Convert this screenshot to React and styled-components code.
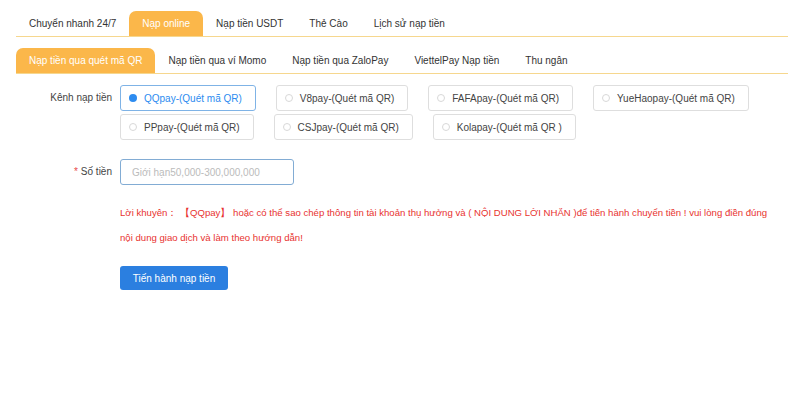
import React, { useState } from "react";
import styled, { createGlobalStyle } from "styled-components";

const GlobalStyle = createGlobalStyle`
  html, body {
    margin: 0;
    padding: 0;
    background: #fff;
    font-family: "Liberation Sans", Arial, sans-serif;
    color: #333;
  }
`;

const Page = styled.div`
  width: 772px;
  padding: 11px 0 0 16px;
`;

const TabBar = styled.div`
  display: flex;
  height: 25px;
  border-bottom: 1px solid #f6d78e;
  margin-bottom: ${(p) => p.$mb || 0}px;
`;

const Tab = styled.div`
  display: flex;
  align-items: center;
  padding: 0 ${(p) => p.$pad || 14}px;
  font-size: 10px;
  color: ${(p) => (p.$active ? "#fff" : "#333")};
  background: ${(p) => (p.$active ? "#fbb74a" : "transparent")};
  border-radius: 7px 7px 0 0;
  white-space: nowrap;
  cursor: pointer;
`;

const Row = styled.div`
  display: flex;
  align-items: ${(p) => p.$align || "center"};
  margin-top: ${(p) => p.$mt || 0}px;
`;

const Label = styled.div`
  width: 96px;
  flex: none;
  text-align: right;
  font-size: 10px;
  color: #444;
  padding-right: 8px;
  line-height: 26px;
`;

const Star = styled.span`
  color: #e84a4a;
  margin-right: 3px;
`;

const Channels = styled.div`
  display: flex;
  flex-wrap: wrap;
  column-gap: 20px;
  row-gap: 3px;
  width: 660px;
`;

const Channel = styled.div`
  display: flex;
  align-items: center;
  height: 24px;
  padding: 0 13px 0 8px;
  border: 1px solid ${(p) => (p.$checked ? "#7fb3e6" : "#dedede")};
  border-radius: 3px;
  font-size: 10px;
  color: ${(p) => (p.$checked ? "#2d8cf0" : "#444")};
  cursor: pointer;
`;

const Dot = styled.span`
  width: 8px;
  height: 8px;
  border-radius: 50%;
  box-sizing: border-box;
  border: ${(p) => (p.$checked ? "none" : "1px solid #d8d8d8")};
  background: ${(p) => (p.$checked ? "#2d8cf0" : "#fff")};
  margin-right: 7px;
  flex: none;
`;

const Input = styled.input`
  width: 174px;
  height: 26px;
  box-sizing: border-box;
  border: 1px solid #82acd4;
  border-radius: 3px;
  padding: 0 11px;
  font-size: 10px;
  font-family: inherit;
  outline: none;
  &::placeholder {
    color: #bbb;
  }
`;

const Tip = styled.p`
  margin: 15px 0 0 104px;
  font-size: 9.6px;
  line-height: 25px;
  color: #e8322f;
  width: 652px;
`;

const Submit = styled.button`
  display: block;
  margin: 16px 0 0 104px;
  width: 108px;
  height: 24px;
  border: none;
  border-radius: 3px;
  background: #2b7fe0;
  color: #fff;
  font-size: 10px;
  font-family: inherit;
  cursor: pointer;
`;

const topTabs = ["Chuyển nhanh 24/7", "Nạp online", "Nạp tiền USDT", "Thẻ Cào", "Lịch sử nạp tiền"];
const subTabs = ["Nạp tiền qua quét mã QR", "Nạp tiền qua ví Momo", "Nạp tiền qua ZaloPay", "ViettelPay Nạp tiền", "Thu ngân"];
const channels = [
  "QQpay-(Quét mã QR)",
  "V8pay-(Quét mã QR)",
  "FAFApay-(Quét mã QR)",
  "YueHaopay-(Quét mã QR)",
  "PPpay-(Quét mã QR)",
  "CSJpay-(Quét mã QR)",
  "Kolapay-(Quét mã QR )",
];

export default function App() {
  const [top, setTop] = useState(1);
  const [sub, setSub] = useState(0);
  const [channel, setChannel] = useState(0);

  return (
    <Page>
      <GlobalStyle />
      <TabBar $mb={11}>
        {topTabs.map((t, i) => (
          <Tab key={t} $active={i === top} $pad={13} onClick={() => setTop(i)}>
            {t}
          </Tab>
        ))}
      </TabBar>
      <TabBar $mb={11}>
        {subTabs.map((t, i) => (
          <Tab key={t} $active={i === sub} $pad={13} onClick={() => setSub(i)}>
            {t}
          </Tab>
        ))}
      </TabBar>

      <Row $align="flex-start">
        <Label>Kênh nạp tiền</Label>
        <Channels>
          {channels.map((c, i) => (
            <Channel key={c} $checked={i === channel} onClick={() => setChannel(i)}>
              <Dot $checked={i === channel} />
              {c}
            </Channel>
          ))}
        </Channels>
      </Row>

      <Row $mt={19}>
        <Label>
          <Star>*</Star>Số tiền
        </Label>
        <Input placeholder="Giới hạn50,000-300,000,000" />
      </Row>

      <Tip>
        Lời khuyên： 【QQpay】 hoặc có thể sao chép thông tin tài khoản thụ hưởng và ( NỘI DUNG LỜI NHẮN )để tiến hành chuyển tiền ! vui lòng điền đúng nội dung giao dịch và làm theo hướng dẫn!
      </Tip>

      <Submit>Tiến hành nạp tiền</Submit>
    </Page>
  );
}
